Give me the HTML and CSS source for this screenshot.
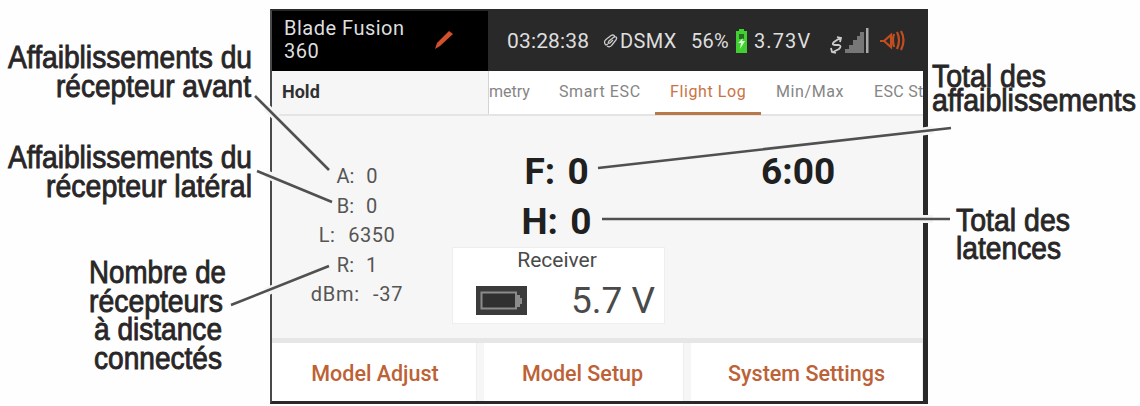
FILE: index.html
```html
<!DOCTYPE html>
<html lang="fr">
<head>
<meta charset="utf-8">
<title>Flight Log</title>
<link rel="stylesheet" href="styles.css">
</head>
<body>
<main class="figure">
  <section class="device">
    <header class="topbar">
      <div class="model"><span class="model-name">Blade Fusion<br>360</span>
        <svg class="pencil" width="22" height="24" viewBox="0 0 22 24"><path d="M1 20 3 14 15 2 19 5 6 17Z" fill="#d2512c"/></svg>
      </div>
      <div class="status">
        <span class="clock">03:28:38</span>
        <svg class="link" width="15" height="16" viewBox="0 0 15 16" fill="none" stroke="#ccc" stroke-width="1.3"><path d="M5 11 3 12Q0 9 3 6.500L8 2.500Q11 1 12 4M4 13Q7 15 9 12L13 7Q15 3 11 4L6 8Q4 11 7 10L10 7"/></svg>
        <span class="dsmx">DSMX</span>
        <span class="percent">56%</span>
        <svg class="battery" width="13" height="25" viewBox="0 0 13 25"><path d="M4 0h5v2h3v22H1V2h3z" fill="#42cf32"/><path d="M4 5h5v5H4z" fill="#286b22"/><path d="m8 9-5 5h3l-1 6 5-8H7z" fill="#d8ffd0"/></svg>
        <span class="volt">3.73V</span>
        <svg class="signal" width="42" height="28" viewBox="0 0 42 28"><path d="M12 11 6 15q-3 3 1 3h4q3 1 0 4l-6 3M3 21l1 4 4 1M9 10l4 1-1 4" fill="none" stroke="#ccc" stroke-width="1.800"/><path d="M17 26v-4h4v-4h4v-5h4V9h3V5h4v21z" fill="#777"/><path d="M38 1h2.500v25H38z" fill="#aaa"/></svg>
        <svg class="speaker" width="28" height="26" viewBox="0 0 28 26" fill="none" stroke="#c24e20" stroke-width="2.200"><path d="M2 13h4l7-6v12l-7-6M16 6q-2 6 0 13M19 4q4 8 0 17M23 3q5 9 0 19"/></svg>
      </div>
    </header>
    <nav class="tabs">
      <div class="mode">Hold</div>
      <div class="tab telemetry">metry</div>
      <div class="tab smart">Smart ESC</div>
      <div class="tab active">Flight Log</div>
      <div class="tab minmax">Min/Max</div>
      <div class="tab esc">ESC St</div>
    </nav>
    <div class="content">
      <div class="stats"><div class="s-a">A:&nbsp; 0</div><div class="s-b">B:&nbsp; 0</div><div class="s-l">L:&nbsp; 6350</div><div class="s-r">R:&nbsp; 1</div><div class="s-d">dBm:&nbsp; -37</div></div>
      <div class="middle">
        <div class="big fades">F: 0</div>
        <div class="big holds">H: 0</div>
        <div class="receiver">
          <div class="receiver-title">Receiver</div>
          <div class="receiver-row">
            <svg width="51" height="29" viewBox="0 0 51 29"><path d="M0 0h51v29H0z" fill="#3b3b3b"/><path d="M5.500 6.500H40V22.500H5.500z" fill="#303030" stroke="#8b8b8b" stroke-width="2"/><path d="M40 9h4v3h2v6h-2v3h-4z" fill="#8b8b8b"/></svg>
            <span class="receiver-volt">5.7 V</span>
          </div>
        </div>
      </div>
      <div class="timer">6:00</div>
    </div>
    <footer class="buttons">
      <div class="button"><span class="adjust">Model Adjust</span></div>
      <div class="button"><span class="setup">Model Setup</span></div>
      <div class="button"><span class="settings">System Settings</span></div>
    </footer>
  </section>
  <svg class="callouts" width="1140" height="406" viewBox="0 0 1140 406">
    <g class="halo"><path d="M266 107 277 118M266 174 277 179M266 292 277 287M919 132 933 130M919 219H933"/></g>
    <g class="leaders"><path d="M255 96 329 170M257 171 332 202M231 305 329 266M598 168 951 128M602 219H950"/></g>
    <g class="labels">
      <text x="8" y="67.500" textLength="244" lengthAdjust="spacingAndGlyphs">Affaiblissements du</text>
      <text x="56" y="96.500" textLength="195" lengthAdjust="spacingAndGlyphs">récepteur avant</text>
      <text x="8" y="167.500" textLength="244" lengthAdjust="spacingAndGlyphs">Affaiblissements du</text>
      <text x="46" y="196.500" textLength="206" lengthAdjust="spacingAndGlyphs">récepteur latéral</text>
      <text x="89" y="283" textLength="137" lengthAdjust="spacingAndGlyphs">Nombre de</text>
      <text x="89" y="311.500" textLength="134" lengthAdjust="spacingAndGlyphs">récepteurs</text>
      <text x="94" y="340" textLength="128" lengthAdjust="spacingAndGlyphs">à distance</text>
      <text x="94" y="369" textLength="128" lengthAdjust="spacingAndGlyphs">connectés</text>
      <text x="932" y="86.500" textLength="114" lengthAdjust="spacingAndGlyphs">Total des</text>
      <text x="932" y="110.500" textLength="204" lengthAdjust="spacingAndGlyphs">affaiblissements</text>
      <text x="956" y="230.500" textLength="114" lengthAdjust="spacingAndGlyphs">Total des</text>
      <text x="956" y="259" textLength="105" lengthAdjust="spacingAndGlyphs">latences</text>
    </g>
  </svg>
</main>
</body>
</html>
```
FILE: styles.css
```css
* { box-sizing: border-box; }
body { margin: 0; background: #fefefe; font-family: Roboto, sans-serif; }
.figure { position: relative; width: 1140px; height: 406px; padding: 9px 0 0 270px; overflow: hidden; }
.device { width: 658px; height: 395px; display: grid; grid-template-columns: 651px; grid-template-rows: 60px 45px 222px 1fr; border: solid #292929; border-width: 2px 5px 3px 2px; border-left-color: #4a4a4a; background: #f6f6f6; white-space: nowrap; }
.topbar { display: flex; background: #292929; color: #dedede; }
.model { width: 216px; background: #000; padding: 6px 0 0 12px; display: flex; font-size: 20px; line-height: 23px; letter-spacing: .5px; }
.model-name { width: 150px; }
.pencil { margin-top: 12px; }
.status { display: flex; flex: 1; align-items: center; font-size: 20px; padding-left: 19px; }
.clock { width: 96px; font-size: 21px; letter-spacing: .15px; }
.dsmx { width: 73px; padding-left: 2px; letter-spacing: .4px; }
.percent { width: 44px; font-size: 20px; letter-spacing: .2px; }
.volt { width: 73px; margin-left: 6px; letter-spacing: 1.1px; }
.signal { margin-left: 1px; }
.speaker { margin-left: 8px; }
.tabs { display: flex; color: #858585; font-size: 16px; line-height: 42px; background: #fff; border-bottom: 2px solid #e4e4e4; }
.mode { width: 217px; padding-left: 10px; border-right: 1px solid #d4d4d4; background: #f6f6f6; color: #303030; font-size: 18px; font-weight: 700; }
.tab { flex: none; height: 44px; }
.telemetry { width: 70px; }
.smart { width: 96px; letter-spacing: .6px; }
.active { width: 106px; padding-left: 15px; color: #c97345; border-bottom: 3px solid #b97849; letter-spacing: .6px; }
.minmax { width: 113px; padding-left: 15px; letter-spacing: .6px; }
.esc { width: 49px; overflow: hidden; letter-spacing: .3px; }
.content { display: grid; grid-template-columns: 180px 213px 1fr; }
.stats { padding-top: 46px; text-align: center; font-size: 20px; line-height: 29.500px; color: #555; }
.stats div { width: 170px; word-spacing: 1px; }
.stats .s-l { letter-spacing: .5px; }
.stats .s-d { letter-spacing: .7px; }
.middle { display: flex; flex-direction: column; align-items: center; padding-top: 31px; }
.big { width: 80px; padding-left: 6px; font-size: 37px; font-weight: 700; line-height: 50px; color: #202020; word-spacing: 3px; }
.holds { padding-left: 3px; }
.receiver { width: 213px; height: 77px; background: #fff; border: 1px solid #eee; color: #4a4a4a; }
.receiver-title { width: 208px; text-align: center; font-size: 21px; line-height: 25px; }
.receiver-row { display: flex; padding: 13px 9px 0 23px; justify-content: space-between; align-items: flex-start; }
.receiver-volt { font-size: 37px; line-height: 30px; }
.timer { padding: 31px 0 0 96px; font-size: 37px; line-height: 50px; font-weight: 700; color: #202020; }
.buttons { display: grid; grid-template-columns: 205px 200px 1fr; column-gap: 7px; border-top: 5px solid #e6e6e6; background: #f6f6f6; }
.button { display: flex; align-items: center; justify-content: center; padding-top: 3px; background: #fff; border-right: 1px solid #eee; color: #bd6137; font-size: 21.500px; font-weight: 500; }
.adjust { padding-left: 2px; }
.setup { padding-right: 2px; }
.callouts { position: absolute; top: 0; left: 0; }
.halo path { stroke: #f5f5f5; stroke-width: 8; }
.leaders path { stroke: #505050; stroke-width: 2.6; fill: none; }
.labels { font-family: "Liberation Sans Narrow", "Liberation Sans", sans-serif; font-size: 32px; fill: #292627; stroke: #292627; stroke-width: .9px; }
```
